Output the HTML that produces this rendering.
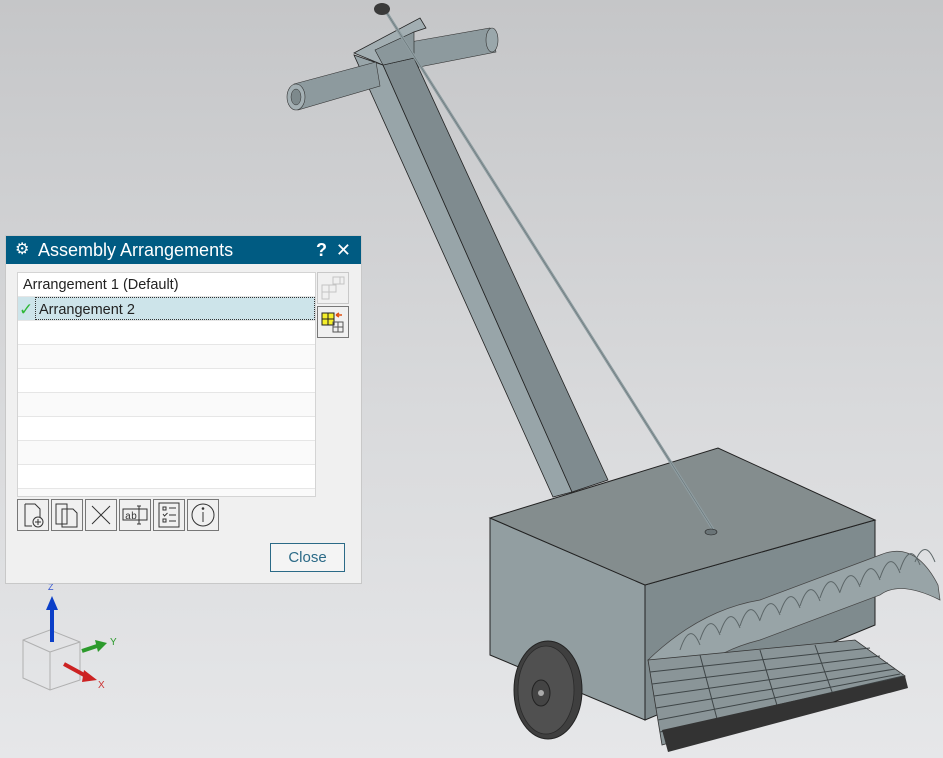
<!DOCTYPE html>
<html><head><meta charset="utf-8"><style>
*{margin:0;padding:0;box-sizing:border-box}
body{width:943px;height:758px;overflow:hidden;position:relative;font-family:"Liberation Sans",sans-serif;background:linear-gradient(#c5c6c8,#d9dadc 55%,#e6e7e9)}
svg.scene{position:absolute;left:0;top:0}
.dlg{position:absolute;left:5px;top:235px;width:357px;height:349px;background:#f0f0f0;border:1px solid #c8c8c8}
.tb{height:28px;background:#005b82;color:#fff;font-size:18px;line-height:28px;padding-left:32px;position:relative}
.tb .g{position:absolute;left:9px;top:0;font-size:16px}
.tb .q{position:absolute;right:34px;top:0;font-weight:bold}
.tb .x{position:absolute;right:10px;top:0;font-size:18px}
.list{position:absolute;left:11px;top:36px;width:299px;height:225px;background:#fff;border:1px solid #d4d4d4;overflow:hidden}
.row{height:24px;border-bottom:1px solid #e6e6e6;font-size:14.5px;line-height:25px;color:#222;padding-left:5px}
.row:nth-child(even){background:#fafafa}
.sel{background:#cde4ea!important;position:relative;padding-left:0}
.sel span{position:absolute;left:17px;top:0;right:0;bottom:0;border:1px dotted #333;padding-left:3px}
.sel b{position:absolute;left:1px;top:0;color:#2fb838;font-weight:normal;font-size:17px}
.btn{position:absolute;width:32px;height:32px;border:1px solid #777;background:#f0f0f0}
.close{position:absolute;left:264px;top:307px;width:75px;height:29px;border:1px solid #2b6a87;background:#f4f4f4;color:#2b6a87;font-size:15px;text-align:center;line-height:27px}
</style></head><body>
<svg class="scene" width="943" height="758">
<!-- crossbar back part -->
<polygon points="410,42 490,28 496,52 414,68" fill="#8d9a9e" stroke="#333" stroke-width=".6"/>
<ellipse cx="492" cy="40" rx="6" ry="12" fill="#9aa7ab" stroke="#333" stroke-width=".6"/>
<!-- post -->
<polygon points="354,55 383,65 572,492 553,497" fill="#98a5a9" stroke="#222" stroke-width=".8"/>
<polygon points="383,65 414,58 608,480 572,492" fill="#7f8b8f" stroke="#222" stroke-width=".8"/>
<polygon points="354,53 420,18 426,28 414,32 384,48 383,65" fill="#a2aeb2" stroke="#222" stroke-width=".8"/>
<polygon points="375,50 414,32 414,58 383,65" fill="#8a979b" stroke="#222" stroke-width=".6"/>
<!-- crossbar front part -->
<polygon points="294,84 376,62 380,86 298,110" fill="#8d9a9e" stroke="#333" stroke-width=".6"/>
<ellipse cx="296" cy="97" rx="9" ry="13" fill="#a4b0b4" stroke="#333" stroke-width=".6"/>
<ellipse cx="296" cy="97" rx="5" ry="8" fill="#7d898c" stroke="#333" stroke-width=".5"/>
<!-- box -->
<polygon points="490,518 645,585 645,720 490,655" fill="#929ea1" stroke="#222" stroke-width="1"/>
<polygon points="645,585 875,520 875,625 645,720" fill="#7f8b8e" stroke="#222" stroke-width="1"/>
<polygon points="490,518 718,448 875,520 645,585" fill="#848d8e" stroke="#222" stroke-width="1"/>
<!-- rod -->
<line x1="385" y1="10" x2="716" y2="534" stroke="#8e9ca0" stroke-width="3"/>
<line x1="385" y1="10" x2="716" y2="534" stroke="#5a6669" stroke-width=".5"/>
<ellipse cx="382" cy="9" rx="8" ry="6" fill="#3a3a3a"/>
<ellipse cx="711" cy="532" rx="6" ry="3" fill="#6a7477" stroke="#222" stroke-width=".6"/>
<!-- rake tines -->
<path d="M648,660 Q700,610 760,600 L880,555 Q915,540 938,585 L940,600 Q900,580 880,595 L760,640 Q720,650 700,670 Z" fill="#98a4a7" stroke="#444" stroke-width=".7"/>
<g stroke="#5c6668" stroke-width="1" fill="none">
<path d="M680,650 q10,-30 20,-5"/><path d="M700,640 q10,-30 20,-5"/><path d="M720,633 q10,-30 20,-5"/><path d="M740,626 q10,-30 20,-5"/><path d="M760,620 q10,-30 20,-5"/><path d="M780,613 q10,-30 20,-5"/><path d="M800,606 q10,-30 20,-5"/><path d="M820,598 q10,-30 20,-5"/><path d="M840,592 q10,-30 20,-5"/><path d="M860,585 q10,-30 20,-5"/><path d="M880,578 q10,-30 20,-5"/><path d="M900,570 q10,-30 20,-5"/><path d="M915,562 q10,-25 20,0"/>
</g>
<!-- grate -->
<polygon points="648,660 855,640 905,676 662,745" fill="#8a9598" stroke="#333" stroke-width=".8"/>
<g stroke="#3e4547" stroke-width="1">
<line x1="650" y1="672" x2="870" y2="648"/><line x1="652" y1="684" x2="880" y2="656"/><line x1="654" y1="696" x2="888" y2="663"/><line x1="656" y1="708" x2="895" y2="669"/><line x1="658" y1="720" x2="900" y2="674"/><line x1="660" y1="732" x2="903" y2="676"/>
<line x1="700" y1="655" x2="720" y2="730"/><line x1="760" y1="650" x2="780" y2="715"/><line x1="815" y1="645" x2="835" y2="700"/>
</g>
<polygon points="662,730 905,676 908,688 668,752" fill="#333"/>
<!-- wheel -->
<ellipse cx="548" cy="690" rx="34" ry="49" fill="#3f3f3f" stroke="#222"/>
<ellipse cx="546" cy="690" rx="28" ry="44" fill="#505050" stroke="#2a2a2a" stroke-width=".8"/>
<ellipse cx="541" cy="693" rx="9" ry="13" fill="#444" stroke="#222"/>
<circle cx="541" cy="693" r="3" fill="#aaa"/>
<!-- triad -->
<g stroke="#b0b0b0" stroke-width="1" fill="none">
<polygon points="23,640 50,630 80,642 80,680 50,690 23,678"/>
<line x1="50" y1="652" x2="80" y2="642"/><line x1="50" y1="652" x2="23" y2="640"/><line x1="50" y1="652" x2="50" y2="690"/>
</g>
<line x1="52" y1="642" x2="52" y2="608" stroke="#0b3fc8" stroke-width="4"/>
<polygon points="46,610 52,596 58,610" fill="#0b3fc8"/>
<line x1="82" y1="651" x2="97" y2="646" stroke="#2c9a2c" stroke-width="4"/>
<polygon points="95,640 107,643 98,652" fill="#2c9a2c"/>
<line x1="64" y1="664" x2="86" y2="676" stroke="#cc2222" stroke-width="4"/>
<polygon points="84,670 97,680 82,682" fill="#cc2222"/>
<text x="48" y="590" font-size="9" fill="#3050d0" font-family="Liberation Sans">Z</text>
<text x="110" y="645" font-size="10" fill="#2c9a2c" font-family="Liberation Sans">Y</text>
<text x="98" y="688" font-size="10" fill="#cc3333" font-family="Liberation Sans">X</text>
</svg>
<div class="dlg">
<div class="tb"><span class="g">⚙</span>Assembly Arrangements<span class="q">?</span><span class="x">✕</span></div>
<div class="list">
<div class="row">Arrangement 1 (Default)</div>
<div class="row sel"><b>✓</b><span>Arrangement 2</span></div>
<div class="row"></div><div class="row"></div><div class="row"></div><div class="row"></div><div class="row"></div><div class="row"></div><div class="row"></div><div class="row"></div>
</div>
<div class="btn" style="left:311px;top:36px;border-color:#c8c8c8">
<svg width="30" height="30"><g fill="none" stroke="#c4c4c4"><rect x="4" y="12" width="7" height="7"/><rect x="11" y="12" width="7" height="7"/><rect x="4" y="19" width="7" height="7"/><rect x="15" y="4" width="7" height="7"/><rect x="22" y="4" width="4" height="7"/></g></svg></div>
<div class="btn" style="left:311px;top:70px">
<svg width="30" height="30"><rect x="4" y="6" width="12" height="12" fill="#f5ef2a" stroke="#222"/><line x1="10" y1="6" x2="10" y2="18" stroke="#222"/><line x1="4" y1="12" x2="16" y2="12" stroke="#222"/><path d="M18,8 h6 M18,8 l3,-2 M18,8 l3,2" stroke="#e05010" stroke-width="1.5" fill="none"/><g fill="none" stroke="#555"><rect x="15" y="15" width="5" height="5"/><rect x="20" y="20" width="5" height="5"/><rect x="15" y="20" width="5" height="5"/><rect x="20" y="15" width="5" height="5"/></g></svg></div>
<div class="btn" style="left:11px;top:263px"><svg width="30" height="30" fill="none" stroke="#333"><path d="M7,4 h10 l5,5 v8 M7,4 v22 h7"/><circle cx="20" cy="22" r="5"/><path d="M20,19 v6 M17,22 h6"/></svg></div>
<div class="btn" style="left:45px;top:263px"><svg width="30" height="30" fill="none" stroke="#333"><path d="M4,4 h11 v20 h-11 z"/><path d="M10,9 h11 l4,4 v14 h-15 z"/></svg></div>
<div class="btn" style="left:79px;top:263px"><svg width="30" height="30" stroke="#333"><path d="M6,6 L24,24 M24,6 L6,24"/></svg></div>
<div class="btn" style="left:113px;top:263px"><svg width="30" height="30" fill="none" stroke="#333"><rect x="3" y="9" width="24" height="11"/><text x="5" y="19" font-size="10" fill="#333" stroke="none" font-family="Liberation Mono">ab</text><path d="M19,6 v18 M17,6 h4 M17,24 h4"/></svg></div>
<div class="btn" style="left:147px;top:263px"><svg width="30" height="30" fill="none" stroke="#333"><rect x="5" y="3" width="20" height="24"/><rect x="9" y="7" width="3" height="3"/><rect x="9" y="19" width="3" height="3"/><path d="M9,14 l1.5,2 l3,-3 M15,8 h7 M15,15 h7 M15,21 h7"/></svg></div>
<div class="btn" style="left:181px;top:263px"><svg width="30" height="30" fill="none" stroke="#333"><circle cx="15" cy="15" r="11"/><path d="M15,12 v10"/><circle cx="15" cy="8.5" r=".8" fill="#333"/></svg></div>
<div class="close">Close</div>
</div>
</body></html>
